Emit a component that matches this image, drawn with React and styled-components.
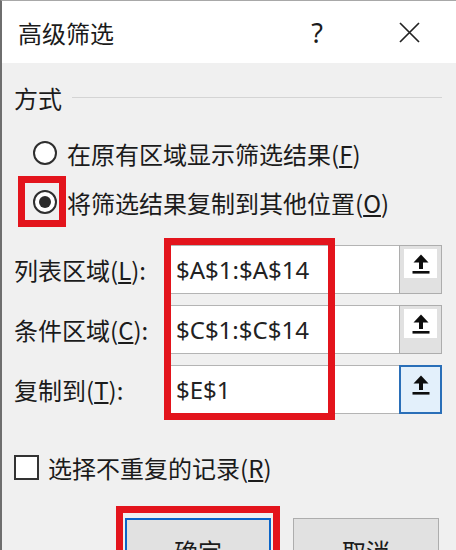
import styled, { createGlobalStyle } from "styled-components";

const GlobalStyle = createGlobalStyle`
  html, body {
    margin: 0;
    padding: 0;
    background: #f0f0f0;
  }
  body {
    font-family: "Noto Sans", "Noto Sans CJK SC", sans-serif;
    color: #1b1b1b;
  }
`;

const Window = styled.div`
  position: relative;
  width: 456px;
  height: 550px;
  box-sizing: border-box;
  border-top: 1px solid #a8a8a8;
  border-left: 2px solid #6e6e6e;
  background: #f0f0f0;
  overflow: hidden;
`;

const TitleBar = styled.div`
  display: flex;
  align-items: center;
  height: 62px;
  padding-left: 16px;
  background: #ffffff;
`;

const Title = styled.div`
  flex: 1;
  font-family: "Noto Sans CJK SC", sans-serif;
  font-size: 24px;
`;

const HelpButton = styled.div`
  width: 20px;
  margin-right: 72px;
  font-family: "Noto Sans", sans-serif;
  font-size: 27px;
  text-align: center;
`;

const CloseButton = styled.div`
  display: flex;
  margin-right: 36px;
`;

const Body = styled.div`
  padding: 0 14px 0 12px;
  font-family: "Noto Sans CJK SC", sans-serif;
  font-size: 24px;
`;

const GroupHeader = styled.div`
  display: flex;
  align-items: center;
  gap: 10px;
  height: 34px;
  margin-top: 17px;

  &::after {
    content: "";
    flex: 1;
    height: 1px;
    background: #d4d4d4;
  }
`;

const RadioRow = styled.div`
  position: relative;
  display: flex;
  align-items: center;
  gap: 10px;
  height: 34px;
  padding-left: 19px;
  margin-top: ${(p) => p.$top}px;
  white-space: nowrap;
`;

const Radio = styled.span`
  display: flex;
  align-items: center;
  justify-content: center;
  width: 24px;
  height: 24px;
  box-sizing: border-box;
  border: 2px solid #2e2e2e;
  border-radius: 50%;
  background: #fff;

  &::after {
    content: "";
    width: 12px;
    height: 12px;
    border-radius: 50%;
    background: ${(p) => (p.$checked ? "#2b2b2b" : "transparent")};
  }
`;

const Annotation = styled.div`
  position: absolute;
  left: ${(p) => p.$left}px;
  top: ${(p) => p.$top}px;
  width: ${(p) => p.$width}px;
  height: ${(p) => p.$height}px;
  box-sizing: border-box;
  border: 7px solid #e3141c;
  pointer-events: none;
`;

const Form = styled.div`
  position: relative;
  display: flex;
  flex-direction: column;
  gap: 11px;
  margin-top: 26px;
`;

const FieldRow = styled.div`
  display: flex;
  align-items: center;
  height: 49px;
`;

const Label = styled.div`
  width: 156px;
  white-space: nowrap;
`;

const Field = styled.div`
  flex: 1;
  display: flex;
  align-items: center;
  align-self: stretch;
  box-sizing: border-box;
  padding-left: 5px;
  border: 1px solid #b4b4b4;
  border-right: none;
  background: #fff;
  font-family: "Noto Sans", sans-serif;
  font-size: 24px;
  color: #222;
`;

const PickButton = styled.div`
  width: 43px;
  align-self: stretch;
  box-sizing: border-box;
  padding: 3px 4px 0 4px;
  border: ${(p) => (p.$focused ? "2px solid #2a6fb8" : "1px solid #adadad")};
  background: ${(p) => (p.$focused ? "#e3f0fb" : "#e1e1e1")};
`;

const PickFace = styled.div`
  display: flex;
  align-items: center;
  justify-content: center;
  height: 29px;
  background: ${(p) => (p.$focused ? "#e3f0fb" : "#ffffff")};
`;

const CheckRow = styled.div`
  display: flex;
  align-items: center;
  gap: 9px;
  height: 34px;
  margin-top: 36px;
`;

const CheckBox = styled.span`
  width: 25px;
  height: 25px;
  box-sizing: border-box;
  border: 2px solid #333;
  background: #fff;
`;

const ButtonRow = styled.div`
  display: flex;
  justify-content: flex-end;
  gap: 22px;
  margin-top: 34px;
  padding-right: 3px;
`;

const Button = styled.div`
  position: relative;
  display: flex;
  align-items: flex-start;
  justify-content: center;
  width: 146px;
  height: 46px;
  box-sizing: border-box;
  padding-top: ${(p) => (p.$default ? 17 : 18)}px;
  border: ${(p) => (p.$default ? "2px solid #0a64c8" : "1px solid #adadad")};
  background: #e1e1e1;
  font-family: "Noto Sans CJK SC", sans-serif;
  font-size: 24px;
  line-height: 1.2;
`;

const UploadIcon = () => (
  <svg width="20" height="22" viewBox="0 0 20 22">
    <path d="M10 1.5 L2.5 9.5 L8 9.5 L8 16 L12 16 L12 9.5 L17.5 9.5 Z" fill="#0d0d0d" />
    <rect x="1.5" y="18" width="17" height="2.6" fill="#0d0d0d" />
  </svg>
);

const CloseIcon = () => (
  <svg width="21" height="21" viewBox="0 0 21 21">
    <path d="M1 1 L20 20 M20 1 L1 20" stroke="#222" strokeWidth="1.7" />
  </svg>
);

const fields = [
  { label: "列表区域", key: "L", value: "$A$1:$A$14" },
  { label: "条件区域", key: "C", value: "$C$1:$C$14" },
  { label: "复制到", key: "T", value: "$E$1", focused: true },
];

export default function App() {
  return (
    <>
      <GlobalStyle />
      <Window>
        <TitleBar>
          <Title>高级筛选</Title>
          <HelpButton>?</HelpButton>
          <CloseButton>
            <CloseIcon />
          </CloseButton>
        </TitleBar>
        <Body>
          <GroupHeader>方式</GroupHeader>
          <RadioRow $top={22}>
            <Radio />
            <span>
              在原有区域显示筛选结果(<u>F</u>)
            </span>
          </RadioRow>
          <RadioRow $top={15}>
            <Radio $checked />
            <span>
              将筛选结果复制到其他位置(<u>O</u>)
            </span>
            <Annotation $left={4} $top={-9} $width={48} $height={51} />
          </RadioRow>
          <Form>
            {fields.map((f) => (
              <FieldRow key={f.key}>
                <Label>
                  {f.label}(<u>{f.key}</u>):
                </Label>
                <Field>{f.value}</Field>
                <PickButton $focused={f.focused}>
                  <PickFace $focused={f.focused}>
                    <UploadIcon />
                  </PickFace>
                </PickButton>
              </FieldRow>
            ))}
            <Annotation $left={150} $top={-7} $width={171} $height={182} />
          </Form>
          <CheckRow>
            <CheckBox />
            <span>
              选择不重复的记录(<u>R</u>)
            </span>
          </CheckRow>
          <ButtonRow>
            <Button $default>
              <span>确定</span>
              <Annotation $left={-11} $top={-14} $width={164} $height={70} />
            </Button>
            <Button>
              <span>取消</span>
            </Button>
          </ButtonRow>
        </Body>
      </Window>
    </>
  );
}
